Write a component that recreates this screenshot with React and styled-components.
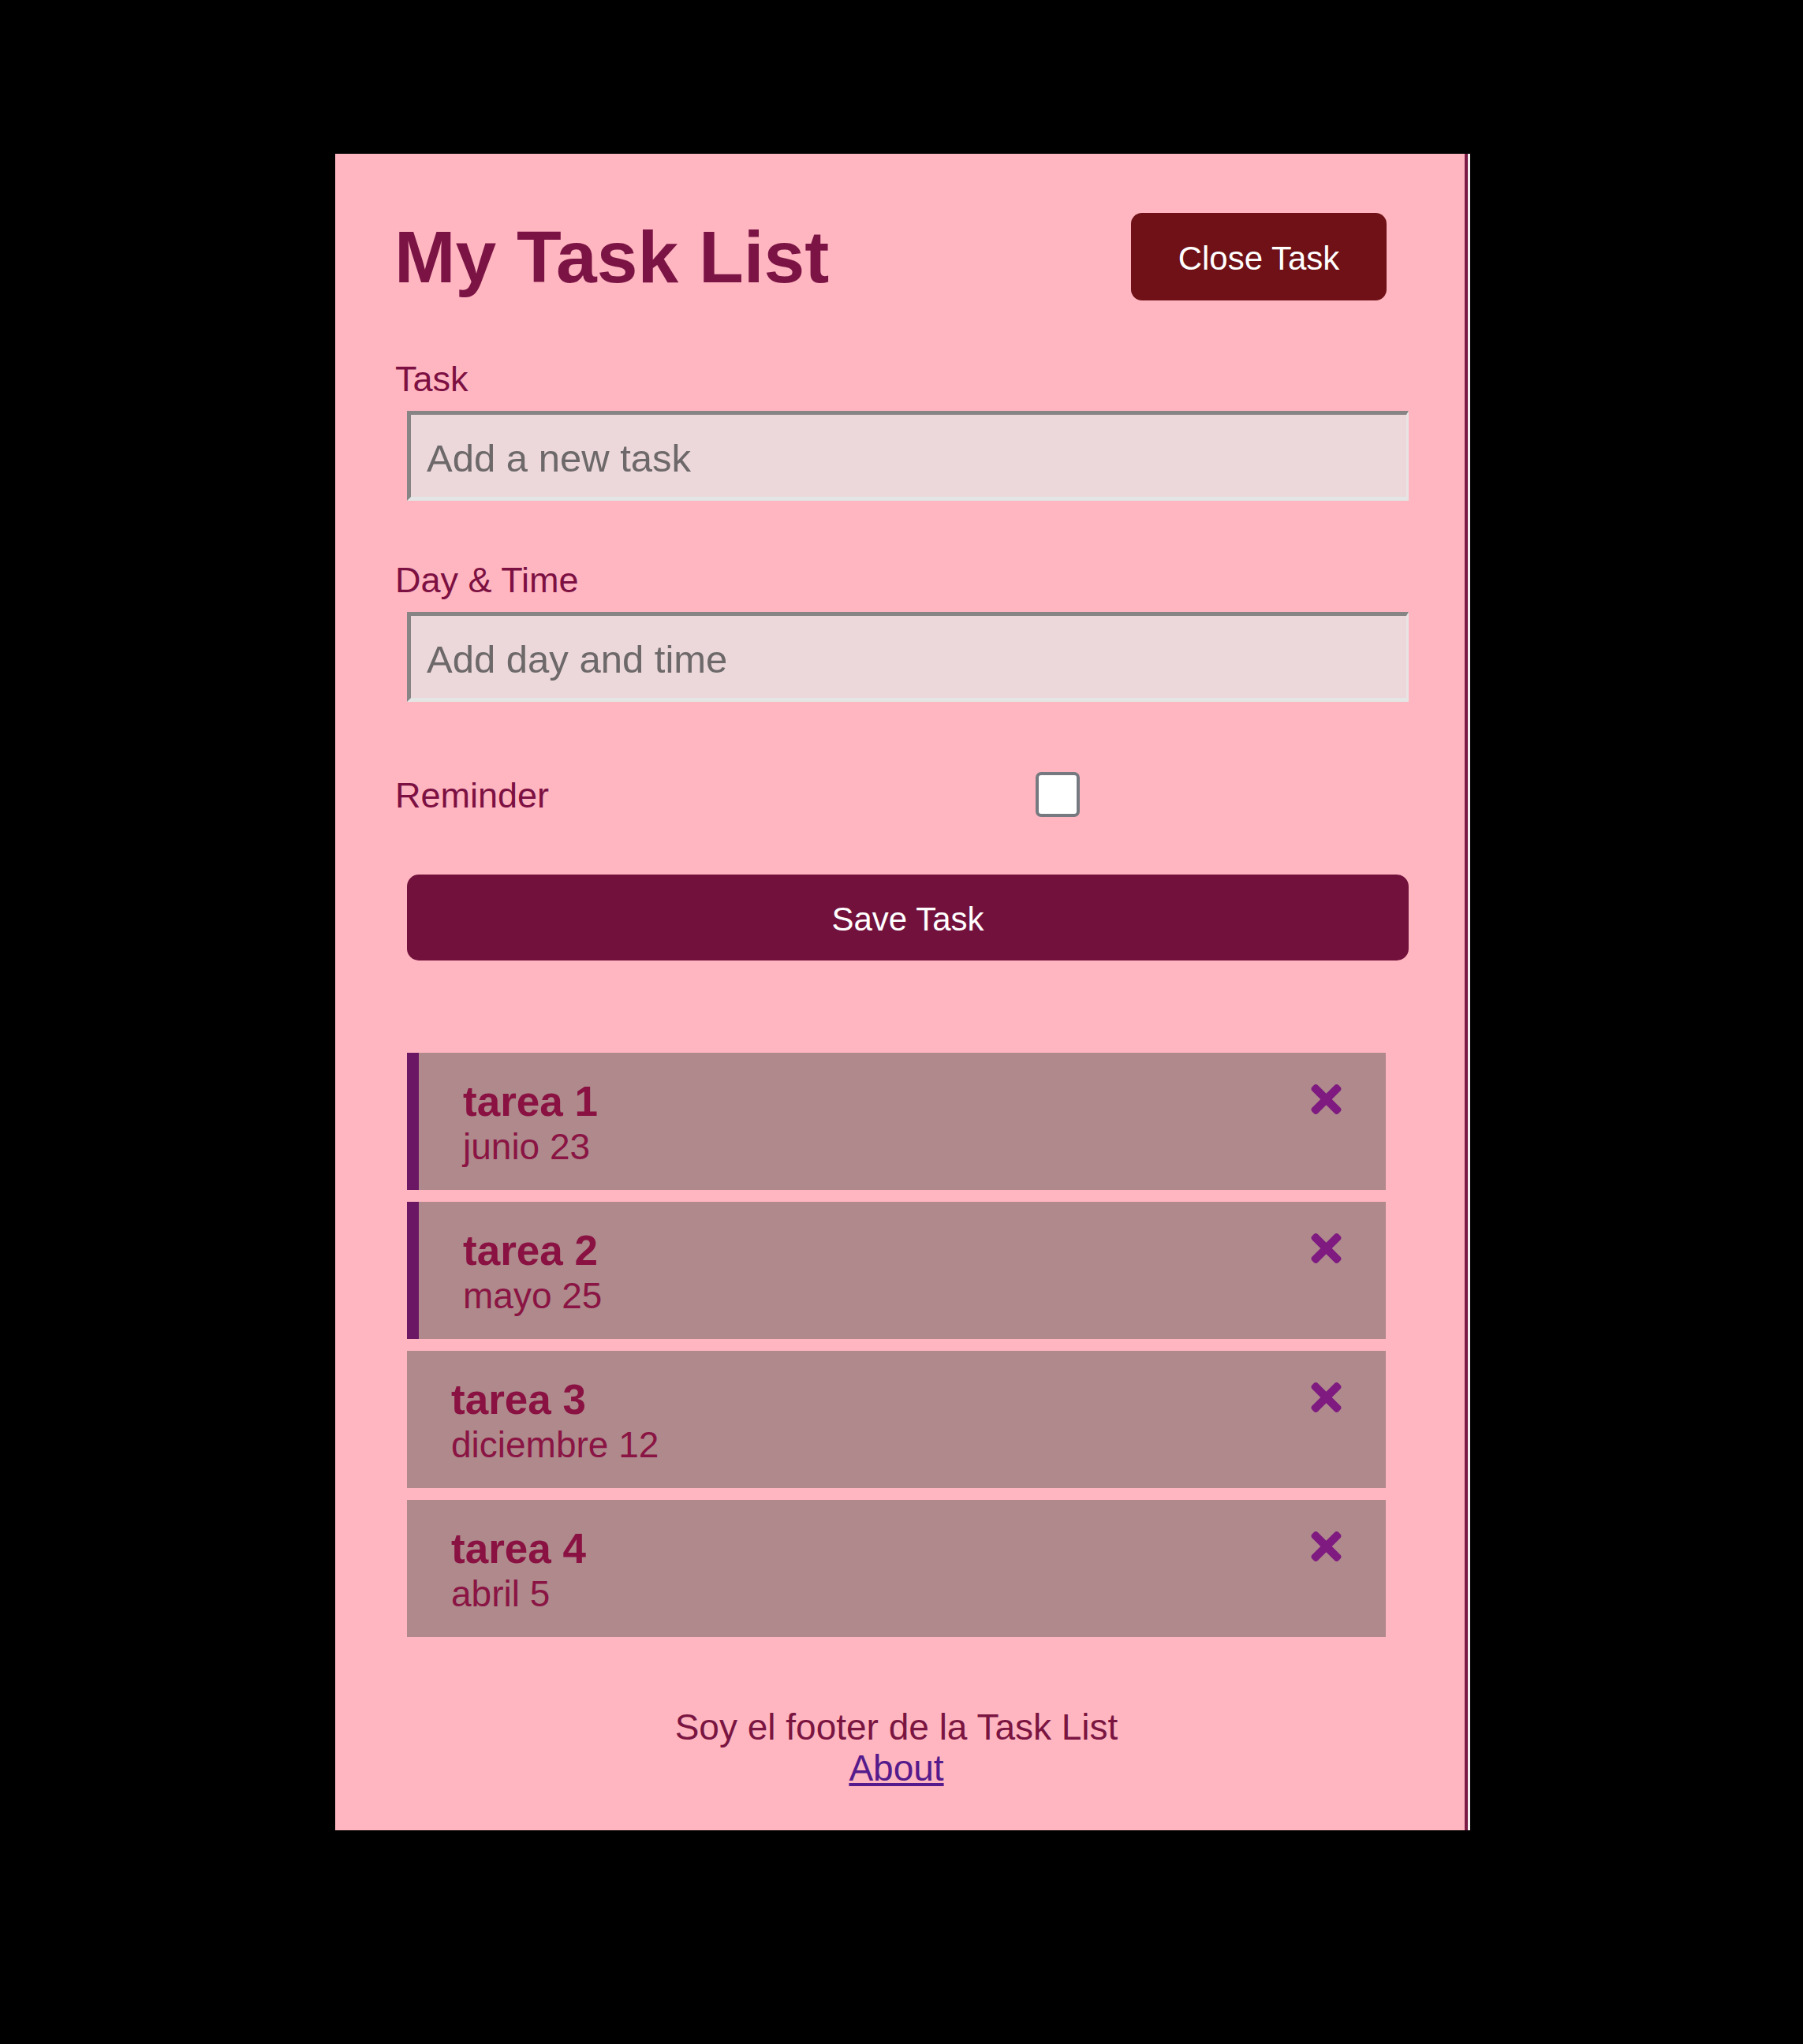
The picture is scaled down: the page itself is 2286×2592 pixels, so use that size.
import React from 'react';
import styled, { createGlobalStyle } from 'styled-components';

const GlobalStyle = createGlobalStyle`
  html, body {
    margin: 0;
    padding: 0;
    background: #000;
  }
  body {
    font-family: "Liberation Sans", Arial, sans-serif;
  }
  *, *::before, *::after {
    box-sizing: border-box;
  }
`;

const Page = styled.div`
  min-height: 2592px;
  padding-top: 195px;
  background: #000;
`;

const Container = styled.div`
  width: 1436px;
  height: 2126px;
  margin: 0 auto;
  background: #ffb6c1;
  padding: 61px 85px 0 76px;
  border-right: 4px solid #7a1a45;
  box-shadow: 3px 0 0 #f3eef0;
`;

const Header = styled.header`
  display: flex;
  justify-content: space-between;
  align-items: center;
  height: 139px;
`;

const Title = styled.h1`
  margin: 0 0 0 -1px;
  font-size: 93px;
  line-height: 106px;
  font-weight: 700;
  color: #7b1444;
`;

const Button = styled.button`
  display: block;
  border: none;
  border-radius: 14px;
  padding: 5px 0 0;
  color: #fff;
  font-family: inherit;
  font-size: 42px;
  cursor: pointer;
  background: ${(p) => p.$bg};
`;

const CloseButton = styled(Button)`
  width: 324px;
  height: 111px;
  margin: 14px;
`;

const SaveButton = styled(Button)`
  width: 1270px;
  height: 109px;
  margin: 73px 0 0 15px;
  border-radius: 15px;
`;

const Form = styled.form`
  display: flex;
  flex-direction: column;
  margin: 60px 0 0;
`;

const Field = styled.div`
  margin-top: ${(p) => p.$top || 0}px;
`;

const Label = styled.label`
  display: block;
  font-size: 45px;
  line-height: 52px;
  color: #7d1042;
`;

const TextInput = styled.input`
  display: block;
  width: 1270px;
  height: 114px;
  margin: 14px 0 0 15px;
  padding: 6px 20px 0;
  font-family: "Liberation Sans", Arial, sans-serif;
  font-size: 49px;
  background: #ecd8db;
  border-style: solid;
  border-width: 5px 3px 5px 5px;
  border-color: #868484 #e9e4e4 #e3e6e4 #868484;
  outline: none;
  &::placeholder {
    color: #6d6869;
  }
`;

const CheckRow = styled.div`
  display: grid;
  grid-template-columns: 1fr 2fr;
  align-items: center;
  height: 57px;
  margin-top: 89px;
`;

const CheckLabel = styled(Label)`
  margin-top: 3px;
`;

const CheckCell = styled.div`
  display: flex;
  justify-content: center;
`;

const Checkbox = styled.input`
  appearance: none;
  width: 56px;
  height: 57px;
  margin: 0 14px 0 0;
  background: #fff;
  border: 4px solid #767a80;
  border-radius: 7px;
`;

const TaskList = styled.div`
  display: flex;
  flex-direction: column;
  gap: 15px;
  width: 1241px;
  margin: 117px 0 0 15px;
`;

const Task = styled.div`
  background: #af898c;
  padding: 32px 56px 28px 56px;
  border-left: ${(p) => (p.$reminder ? '15px solid #6b1764' : 'none')};
`;

const TaskTitle = styled.h3`
  display: flex;
  justify-content: space-between;
  align-items: center;
  margin: 0;
  font-size: 53px;
  line-height: 60px;
  font-weight: 700;
  color: #8a1242;
`;

const TaskDate = styled.p`
  margin: 0;
  font-size: 46px;
  line-height: 54px;
  color: #8a1443;
`;

const DeleteIcon = styled.svg`
  width: 39px;
  height: 38px;
  fill: #7e1a80;
  margin-top: -6px;
  flex: none;
`;

const Footer = styled.footer`
  margin-top: 88px;
  text-align: center;
  font-size: 46px;
  line-height: 52px;
  color: #7a1541;
`;

const FooterLink = styled.a`
  color: #551a8b;
  text-decoration: underline;
`;

const tasks = [
  { id: 1, text: 'tarea 1', day: 'junio 23', reminder: true },
  { id: 2, text: 'tarea 2', day: 'mayo 25', reminder: true },
  { id: 3, text: 'tarea 3', day: 'diciembre 12', reminder: false },
  { id: 4, text: 'tarea 4', day: 'abril 5', reminder: false },
];

const TimesIcon = () => (
  <DeleteIcon viewBox="0 80 352 352" aria-hidden="true">
    <path d="M242.72 256l100.07-100.07c12.28-12.28 12.28-32.19 0-44.48l-22.24-22.24c-12.28-12.28-32.19-12.28-44.48 0L176 189.28 75.93 89.21c-12.28-12.28-32.19-12.28-44.48 0L9.21 111.45c-12.28 12.28-12.28 32.19 0 44.48L109.280 256 9.21 356.07c-12.28 12.28-12.28 32.19 0 44.48l22.24 22.24c12.28 12.28 32.2 12.28 44.48 0L176 322.72l100.07 100.07c12.28 12.28 32.2 12.28 44.48 0l22.24-22.24c12.28-12.28 12.28-32.19 0-44.48L242.72 256z" />
  </DeleteIcon>
);

export default function App() {
  return (
    <Page>
      <GlobalStyle />
      <Container>
        <Header>
          <Title>My Task List</Title>
          <CloseButton $bg="#6f1116">Close Task</CloseButton>
        </Header>
        <Form onSubmit={(e) => e.preventDefault()}>
          <Field>
            <Label>Task</Label>
            <TextInput type="text" placeholder="Add a new task" />
          </Field>
          <Field $top={75}>
            <Label>Day &amp; Time</Label>
            <TextInput type="text" placeholder="Add day and time" />
          </Field>
          <CheckRow>
            <CheckLabel>Reminder</CheckLabel>
            <CheckCell>
              <Checkbox type="checkbox" />
            </CheckCell>
          </CheckRow>
          <SaveButton type="submit" $bg="#72113c">Save Task</SaveButton>
        </Form>
        <TaskList>
          {tasks.map((t) => (
            <Task key={t.id} $reminder={t.reminder}>
              <TaskTitle>
                {t.text}
                <TimesIcon />
              </TaskTitle>
              <TaskDate>{t.day}</TaskDate>
            </Task>
          ))}
        </TaskList>
        <Footer>
          <div>Soy el footer de la Task List</div>
          <FooterLink href="#about">About</FooterLink>
        </Footer>
      </Container>
    </Page>
  );
}
